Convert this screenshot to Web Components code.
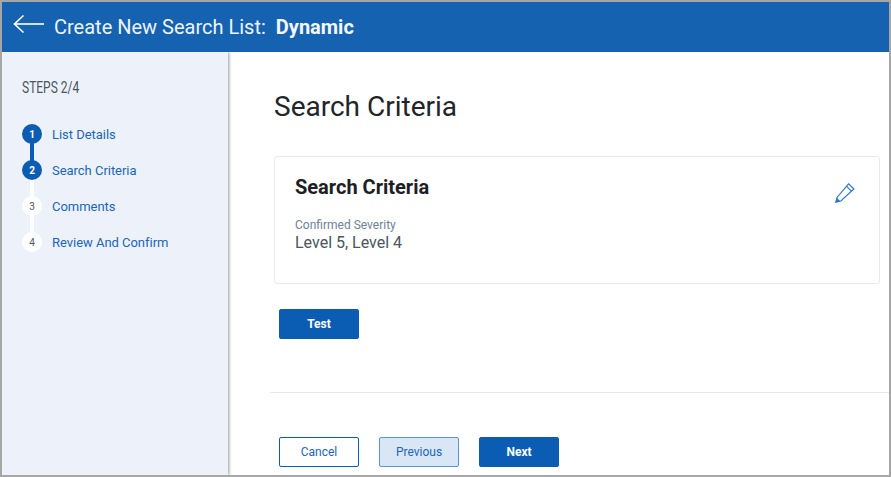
<!DOCTYPE html>
<html>
<head>
<meta charset="utf-8">
<title>Create New Search List</title>
<style>
    html, body { margin: 0; height: 100%; }
    body { font-family: Roboto, "Liberation Sans", sans-serif; background: #fff; overflow: hidden; }
</style>
</head>
<body>
<list-wizard>
    <wizard-header slot="header" title-text="Create New Search List:" type-text="Dynamic"></wizard-header>
    <wizard-steps slot="side" current="2">
        <wizard-step num="1" state="done">List Details</wizard-step>
        <wizard-step num="2" state="done">Search Criteria</wizard-step>
        <wizard-step num="3">Comments</wizard-step>
        <wizard-step num="4" last>Review And Confirm</wizard-step>
    </wizard-steps>
    <h1 class="page-title" style="margin:0;font:400 28px/32px Roboto,sans-serif;color:#212529;padding:39px 0 0 46px">Search Criteria</h1>
    <criteria-card heading="Search Criteria" label="Confirmed Severity" value="Level 5, Level 4"></criteria-card>
    <div style="padding:25px 0 0 51px"><wizard-button kind="primary">Test</wizard-button></div>
    <div style="margin:53px 0 0 42px;border-top:1px solid #e6e9ec"></div>
    <div style="display:flex;gap:20px;padding:44px 0 0 51px">
        <wizard-button kind="outline">Cancel</wizard-button>
        <wizard-button kind="soft">Previous</wizard-button>
        <wizard-button kind="primary">Next</wizard-button>
    </div>
</list-wizard>

<script>
class ListWizard extends HTMLElement {
    constructor() {
        super();
        this.attachShadow({mode: 'open'});
        this.shadowRoot.innerHTML = `
        <style>
            :host{
                display: flex;
                flex-direction: column;
                box-sizing: border-box;
                width: 891px;
                height: 477px;
                border: 2px solid #a6a6a6;
                overflow: hidden;
            }
            .body{
                flex: 1;
                display: flex;
                min-height: 0;
            }
            .side{
                flex: 0 0 226px;
                background: #edf2fa;
                box-shadow: 1px 0 3px rgba(0,0,0,.4);
                position: relative;
            }
            .main{
                flex: 1;
                min-width: 0;
            }
        </style>
        <slot name="header"></slot>
        <div class="body">
            <div class="side"><slot name="side"></slot></div>
            <div class="main"><slot></slot></div>
        </div>`;
    }
}

class WizardHeader extends HTMLElement {
    constructor() {
        super();
        this.attachShadow({mode: 'open'});
        this.shadowRoot.innerHTML = `
        <style>
            :host{
                display: flex;
                align-items: center;
                height: 50px;
                flex: 0 0 50px;
                background: #1562b0;
                color: #eef3fa;
                font-size: 20px;
                position: relative;
                z-index: 1;
            }
            svg{
                margin: 0 9px 0 11px;
                display: block;
                position: relative;
                top: -3px;
            }
            b{
                font-weight: 700;
                color: #f4f7fb;
                margin-left: 10px;
            }
        </style>
        <svg width="32" height="20" viewBox="0 0 32 20" fill="none" stroke="#fff" stroke-width="1.6">
            <path d="M1.5 10H31"/>
            <path d="M10.5 1.5L1.5 10l9 8.5"/>
        </svg>
        <span>${this.getAttribute('title-text')}</span><b>${this.getAttribute('type-text')}</b>`;
    }
}

class WizardSteps extends HTMLElement {
    constructor() {
        super();
        this.attachShadow({mode: 'open'});
        this.shadowRoot.innerHTML = `
        <style>
            :host{
                display: block;
                padding: 26px 0 0 20px;
            }
            .title{
                display: inline-block;
                font: 400 16px/20px Roboto, sans-serif;
                color: #4a5560;
                transform: scaleX(.75);
                transform-origin: left center;
                margin-bottom: 18px;
            }
            .list{
                display: flex;
                flex-direction: column;
            }
        </style>
        <div class="title">STEPS ${this.getAttribute('current')}/4</div>
        <div class="list"><slot></slot></div>`;
    }
}

class WizardStep extends HTMLElement {
    constructor() {
        super();
        this.attachShadow({mode: 'open'});
        const done = this.getAttribute('state') === 'done';
        const num = this.getAttribute('num');
        // connector runs from this dot down to the next one
        const barColor = (num === '1') ? '#0b5db3' : '#fff';
        this.shadowRoot.innerHTML = `
        <style>
            :host{
                display: flex;
                align-items: center;
                height: 36px;
                position: relative;
                font-size: 13px;
                color: #1b66b8;
            }
            .dot{
                width: 20px;
                height: 20px;
                border-radius: 50%;
                flex: none;
                display: flex;
                align-items: center;
                justify-content: center;
                font-size: 10px;
                font-weight: ${done ? 700 : 400};
                background: ${done ? '#0b5db3' : '#fff'};
                color: ${done ? '#fff' : '#4a5560'};
                position: relative;
                z-index: 1;
            }
            .bar{
                position: absolute;
                left: 8px;
                top: 26px;
                width: 4px;
                height: 20px;
                background: ${barColor};
                display: ${this.hasAttribute('last') ? 'none' : 'block'};
            }
            .text{
                margin-left: 10px;
                letter-spacing: -.03px;
            }
        </style>
        <span class="dot">${num}</span>
        <span class="bar"></span>
        <span class="text"><slot></slot></span>`;
    }
}

class CriteriaCard extends HTMLElement {
    constructor() {
        super();
        this.attachShadow({mode: 'open'});
        this.shadowRoot.innerHTML = `
        <style>
            :host{
                display: block;
                box-sizing: border-box;
                height: 128px;
                width: 606px;
                margin: 33px 0 0 46px;
                padding: 19px 20px;
                border: 1px solid #e6ebef;
                border-radius: 3px;
                position: relative;
            }
            h2{
                margin: 0;
                font: 700 20px/22px Roboto, sans-serif;
                color: #1c2025;
            }
            .label{
                margin-top: 20px;
                font-size: 12px;
                line-height: 14px;
                color: #6f8296;
            }
            .value{
                font-size: 16px;
                line-height: 20px;
                margin-top: 1px;
                color: #4a5560;
            }
            svg{
                position: absolute;
                right: 24px;
                top: 26px;
            }
        </style>
        <h2>${this.getAttribute('heading')}</h2>
        <div class="label">${this.getAttribute('label')}</div>
        <div class="value">${this.getAttribute('value')}</div>
        <svg width="20" height="20" viewBox="0 0 20 20" fill="none" stroke="#2f77c4" stroke-width="1.15">
            <path d="M1 19l1.2-4.8L13.6.9l5.3 5.1L5.8 18z"/>
            <path d="M11.4 3.2l5.2 5.1"/>
            <path d="M1 19l.9-3.4 2.6 2.6z" fill="#2f77c4"/>
        </svg>`;
    }
}

class WizardButton extends HTMLElement {
    constructor() {
        super();
        this.attachShadow({mode: 'open'});
        this.shadowRoot.innerHTML = `
        <style>
            :host{
                display: inline-flex;
                align-items: center;
                justify-content: center;
                box-sizing: border-box;
                width: 80px;
                height: 30px;
                border-radius: 2px;
                font-size: 12px;
                border: 1px solid #0b5db3;
            }
            :host([kind="primary"]){
                background: #0b5db3;
                color: #fff;
                font-weight: 700;
            }
            :host([kind="outline"]){
                background: #fff;
                color: #1b66b8;
            }
            :host([kind="soft"]){
                background: #d9e6f5;
                color: #1b66b8;
                border-color: #5b95d3;
            }
        </style>
        <slot></slot>`;
    }
}

customElements.define('list-wizard', ListWizard);
customElements.define('wizard-header', WizardHeader);
customElements.define('wizard-steps', WizardSteps);
customElements.define('wizard-step', WizardStep);
customElements.define('criteria-card', CriteriaCard);
customElements.define('wizard-button', WizardButton);
</script>
</body>
</html>
